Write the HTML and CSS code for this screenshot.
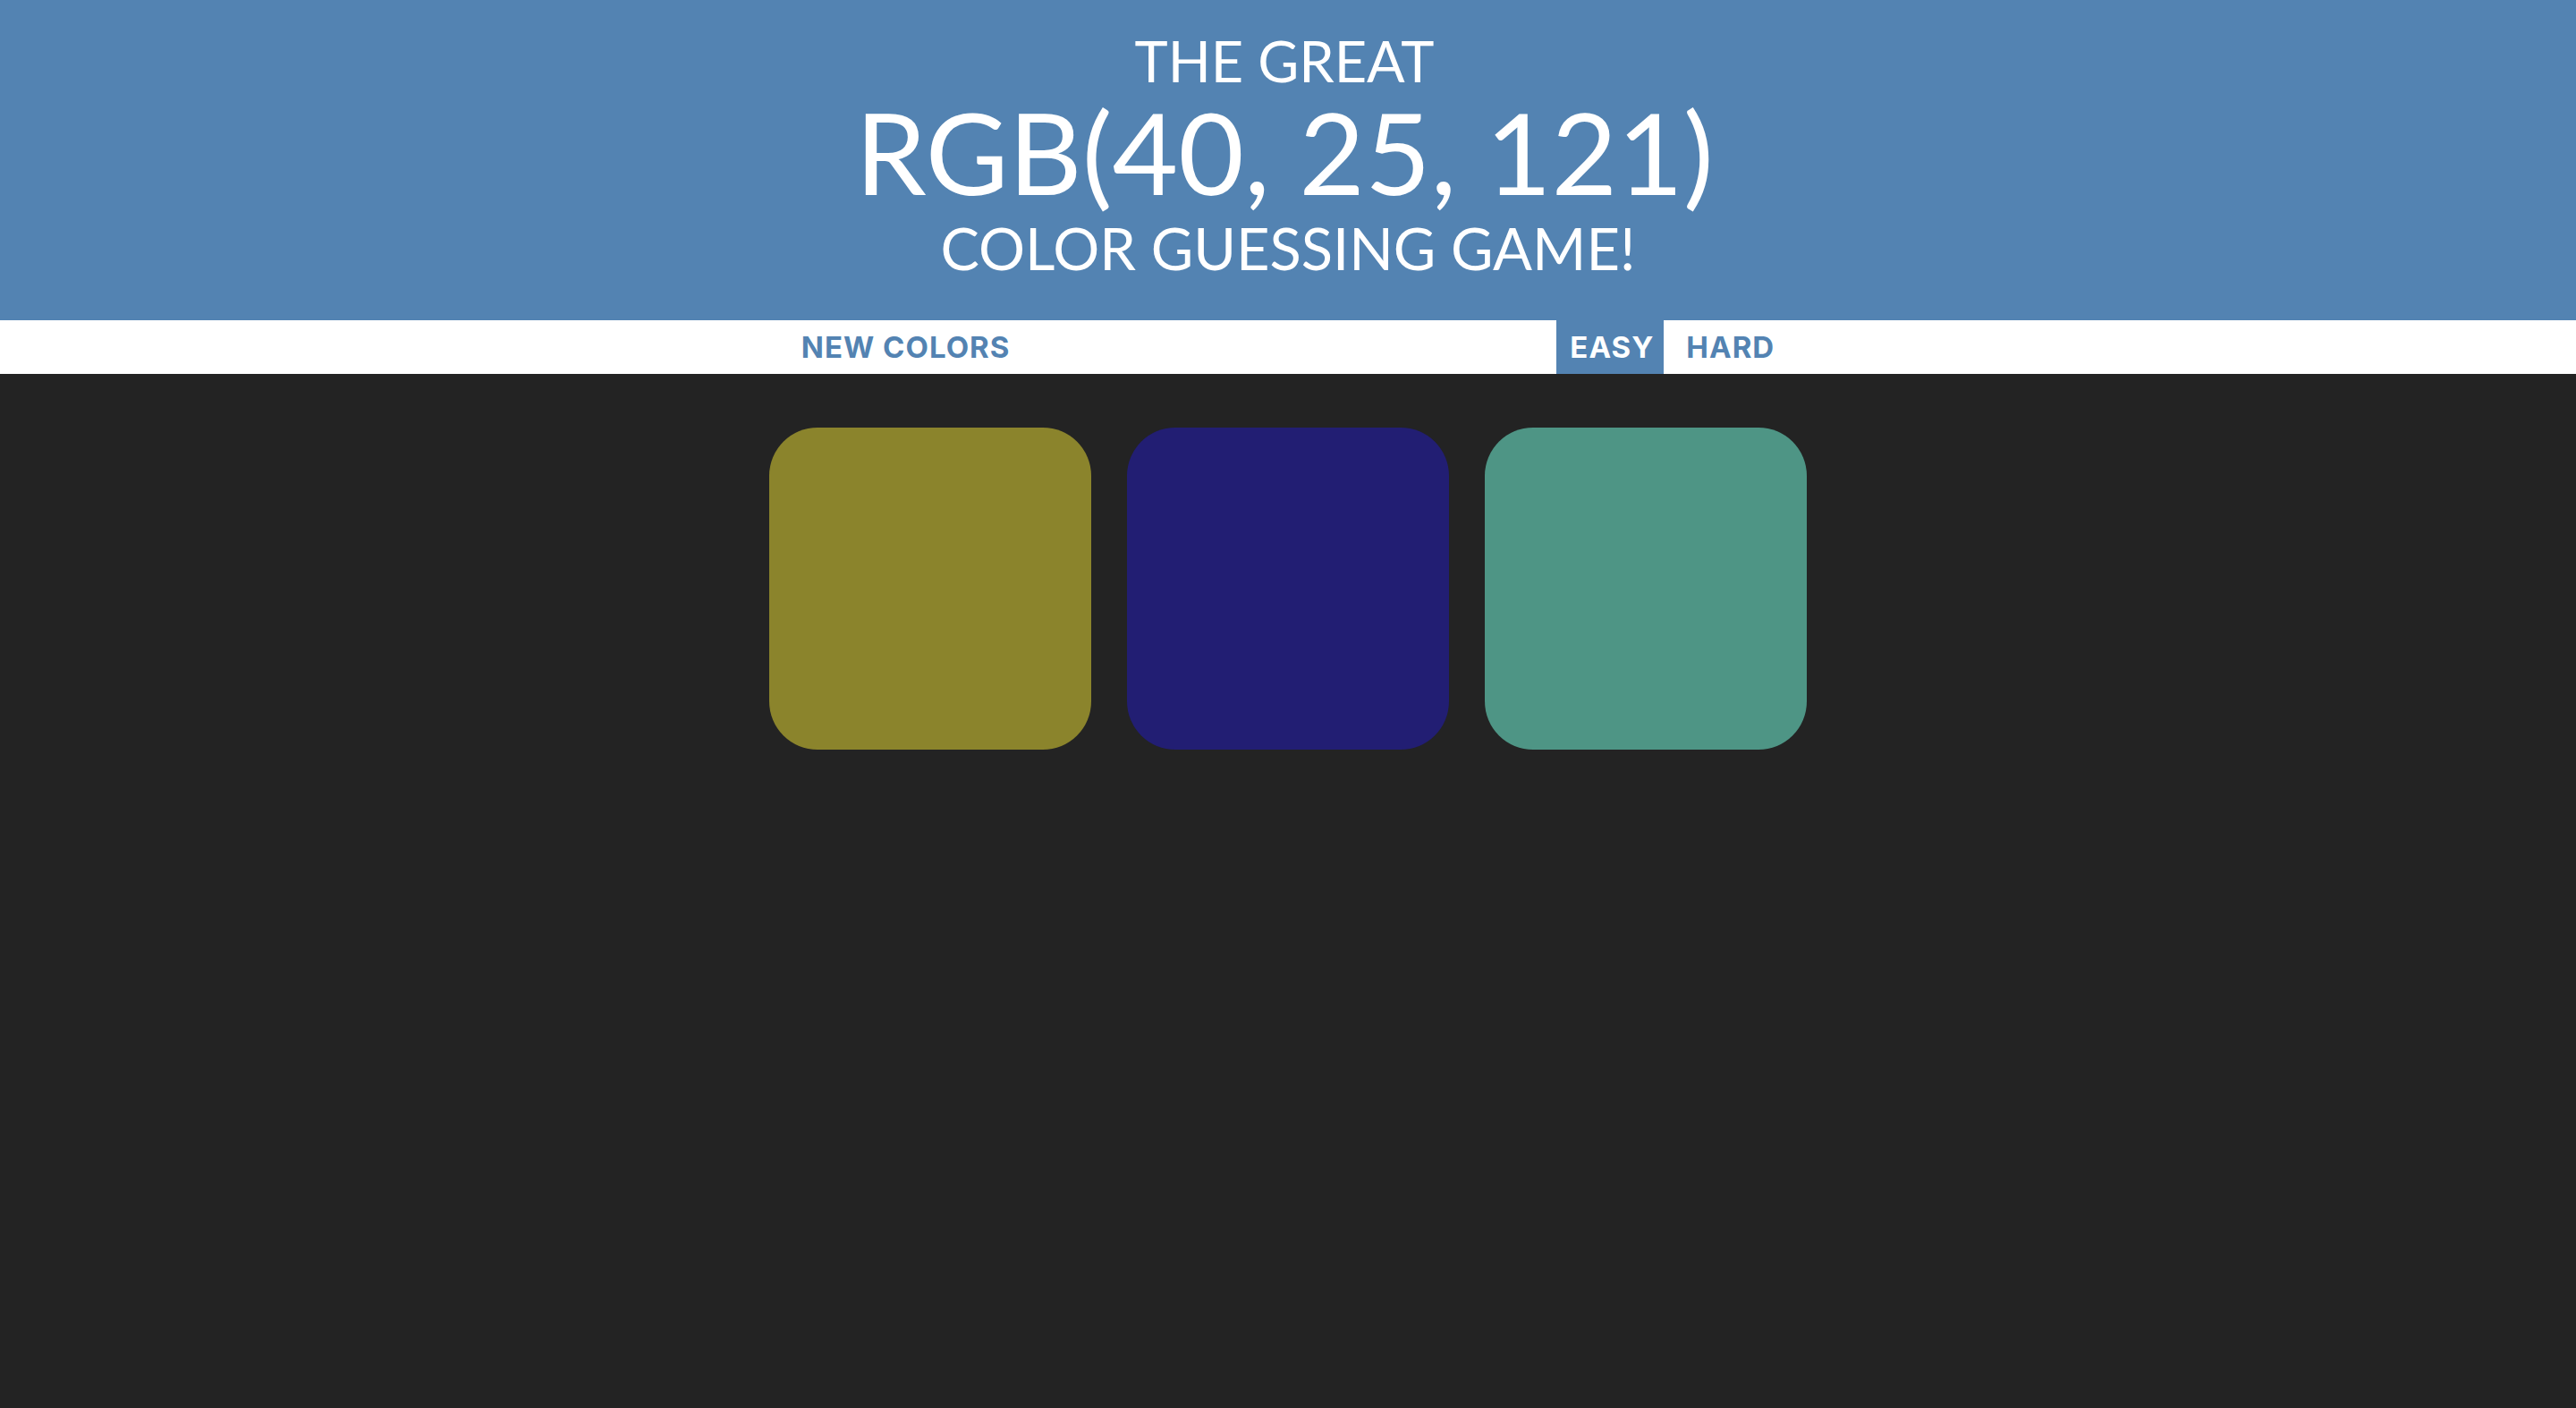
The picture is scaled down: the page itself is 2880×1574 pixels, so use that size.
FILE: index.html
```html
<!DOCTYPE html>
<html lang="en">
<head>
<meta charset="utf-8">
<title>Color Game</title>
<link rel="stylesheet" href="styles.css">
</head>
<body>
<header class="title">
  <span class="title-line title-top">THE GREAT</span>
  <span class="title-line title-rgb">RGB(40, 25, 121)</span>
  <span class="title-line title-bottom">COLOR GUESSING GAME!</span>
</header>
<nav class="stripe">
  <button class="btn btn-reset">NEW COLORS</button>
  <span class="message"></span>
  <button class="btn btn-mode btn-selected">EASY</button>
  <button class="btn btn-mode btn-hard">HARD</button>
</nav>
<main class="board">
  <div class="square sq-olive"></div>
  <div class="square sq-navy"></div>
  <div class="square sq-teal"></div>
</main>
</body>
</html>
```
FILE: styles.css
```css
html, body {
  margin: 0;
  padding: 0;
}
body {
  background: #232323;
  min-height: 1574px;
  font-family: Lato, "Open Sans", sans-serif;
}
.title {
  background: #5383b2;
  color: #ffffff;
  text-align: center;
  padding: 30px 8px 37px 0;
  height: 358px;
  box-sizing: border-box;
  font-weight: 400;
}
.title-line {
  display: block;
}
.title-top {
  font-size: 63px;
  line-height: 75.6px;
}
.title-rgb {
  font-size: 127px;
  line-height: 127px;
}
.title-bottom {
  font-size: 65px;
  line-height: 89px;
  padding-left: 8px;
}
.stripe {
  background: #ffffff;
  height: 60px;
  display: flex;
  justify-content: center;
  align-items: stretch;
}
.btn {
  border: none;
  background: none;
  margin: 0;
  font-family: Inter, Roboto, sans-serif;
  font-weight: 700;
  font-size: 33px;
  letter-spacing: 1px;
  color: #5383b2;
  padding: 0 15px;
  display: flex;
  align-items: center;
}
.message {
  width: 596px;
}
.btn-selected {
  background: #5383b2;
  color: #ffffff;
  width: 120px;
  padding: 0 0 0 15px;
  box-sizing: border-box;
}
.btn-hard {
  padding: 0 15px 0 25px;
}
.board {
  width: 1160px;
  margin: 60px auto 0;
  display: flex;
  gap: 40px;
}
.square {
  width: 360px;
  height: 360px;
  border-radius: 54px;
}
.sq-olive { background: #8b842c; }
.sq-navy { background: #221e73; }
.sq-teal { background: #4e9585; }
```
